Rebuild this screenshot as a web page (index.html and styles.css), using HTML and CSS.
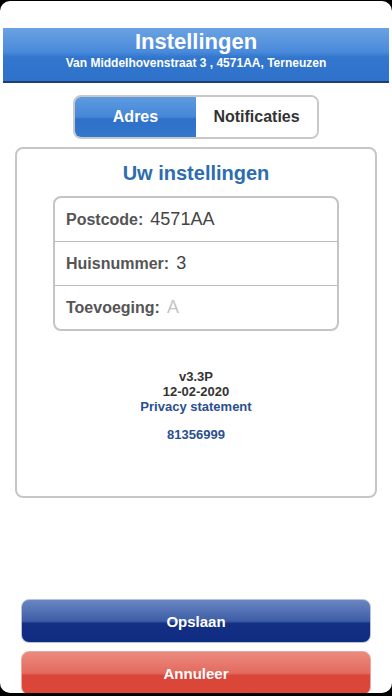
FILE: index.html
```html
<!DOCTYPE html>
<html lang="nl">
<head>
    <meta charset="UTF-8">
    <meta name="viewport" content="width=device-width, initial-scale=1.0">
    <title>Instellingen</title>
    <link rel="stylesheet" href="styles.css">
</head>
<body>
    <div class="screen">
        <div class="header">
            <h1>Instellingen</h1>
            <p>Van Middelhovenstraat 3 , 4571AA, Terneuzen</p>
        </div>

        <div class="tabs">
            <button class="tab active">Adres</button>
            <button class="tab">Notificaties</button>
        </div>

        <div class="card">
            <h2>Uw instellingen</h2>
            <div class="fields">
                <div class="field">
                    <label>Postcode:</label>
                    <span class="value">4571AA</span>
                </div>
                <div class="field">
                    <label>Huisnummer:</label>
                    <span class="value">3</span>
                </div>
                <div class="field">
                    <label>Toevoeging:</label>
                    <span class="value placeholder">A</span>
                </div>
            </div>

            <div class="info">
                <div>v3.3P</div>
                <div>12-02-2020</div>
                <div class="link">Privacy statement</div>
                <div class="link code">81356999</div>
            </div>
        </div>

        <div class="buttons">
            <button class="btn save">Opslaan</button>
            <button class="btn cancel">Annuleer</button>
        </div>
    </div>
</body>
</html>
```

FILE: styles.css
```css
html, body {
    margin: 0;
    padding: 0;
    background: #000;
    height: 100%;
    overflow: hidden;
}
body {
    font-family: 'Liberation Sans', Arial, sans-serif;
}
.screen {
    background: #fff;
    height: 692px;
    margin-top: 1px;
    border-radius: 10px;
    padding-top: 27px;
    box-sizing: border-box;
    overflow: hidden;
}
.header {
    margin: 0 3px;
    height: 55px;
    box-sizing: border-box;
    background: linear-gradient(#6aa3e3 0%, #4a8adb 45%, #3276cd 55%, #2f72cb 100%);
    border-bottom: 2px solid #1d3f73;
    color: #fff;
    text-align: center;
    padding-top: 1px;
}
.header h1 {
    margin: 0;
    font-size: 22px;
    line-height: 25px;
    font-weight: bold;
}
.header p {
    margin: 2px 0 0;
    font-size: 12px;
    font-weight: bold;
}
.tabs {
    display: flex;
    width: 246px;
    height: 44px;
    margin: 12px auto 0 73px;
    border: 2px solid #c8c8c8;
    border-radius: 8px;
    overflow: hidden;
    box-sizing: border-box;
}
.tab {
    flex: 1;
    border: none;
    margin: 0;
    padding: 0;
    font-family: inherit;
    font-size: 16px;
    font-weight: bold;
    background: #fff;
    color: #333;
}
.tab.active {
    flex: 0 0 121px;
    background: linear-gradient(#5d9be0 0%, #4686d8 50%, #2f70c8 55%, #3377cf 100%);
    color: #fff;
}
.card {
    margin: 8px 15px 0;
    height: 351px;
    box-sizing: border-box;
    border: 2px solid #c6c6c6;
    border-radius: 8px;
    padding-top: 12px;
}
.card h2 {
    margin: 0;
    text-align: center;
    color: #2e6cb0;
    font-size: 20px;
    line-height: 24px;
}
.fields {
    margin: 11px 36px 0;
    border: 2px solid #c4c4c4;
    border-radius: 8px;
}
.field {
    height: 43px;
    display: flex;
    align-items: center;
    padding-left: 11px;
    gap: 7px;
    border-bottom: 1px solid #bdbdbd;
}
.field:last-child {
    border-bottom: none;
}
.field label {
    font-weight: bold;
    font-size: 16px;
    color: #555;
}
.value {
    font-size: 18px;
    color: #444;
}
.value.placeholder {
    color: #c4c4c4;
}
.info {
    margin-top: 38px;
    text-align: center;
    font-size: 13px;
    font-weight: bold;
    color: #333;
    line-height: 15px;
}
.link {
    color: #2a4f91;
}
.code {
    margin-top: 13px;
}
.buttons {
    margin: 101px 21px 0;
    display: flex;
    flex-direction: column;
    gap: 8px;
}
.btn {
    height: 44px;
    border: 1px solid #b9c2d6;
    border-radius: 8px;
    font-family: inherit;
    font-size: 15px;
    font-weight: bold;
    color: #fff;
}
.save {
    background: linear-gradient(#6a86c2 0%, #3d5ea6 50%, #142f84 56%, #0f2c82 100%);
}
.cancel {
    border-color: #e7a9a2;
    background: linear-gradient(#ea8a7f 0%, #e46a5e 50%, #d9473a 56%, #dc4637 100%);
}
```
